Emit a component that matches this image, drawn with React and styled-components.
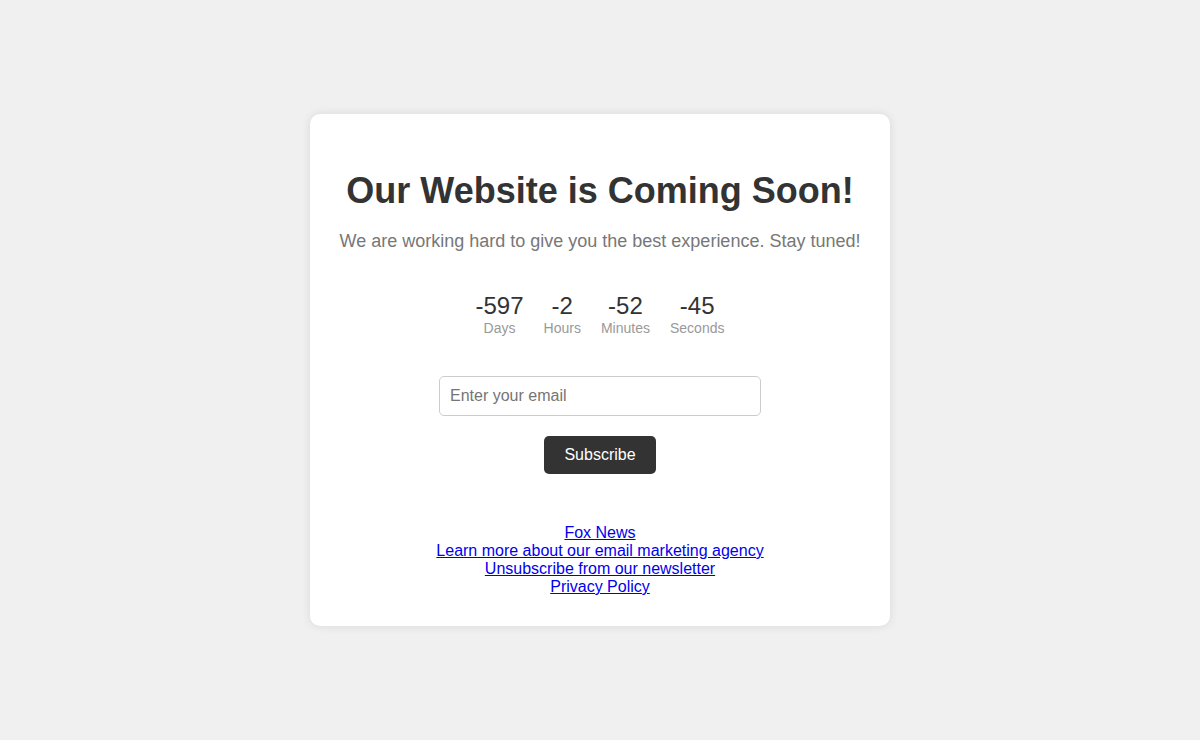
import styled, { createGlobalStyle } from "styled-components"

const GlobalStyle = createGlobalStyle`
  html, body {
    margin: 0;
    padding: 0;
  }
  body {
    background-color: #f0f0f0;
    font-family: "Liberation Sans", Arial, sans-serif;
  }
`

const Page = styled.div`
  display: flex;
  align-items: center;
  justify-content: center;
  height: 100vh;
`

const Card = styled.div`
  width: 580px;
  box-sizing: border-box;
  padding: 30px 20px 30px;
  background: #fff;
  border-radius: 10px;
  box-shadow: 0 0 10px rgba(0, 0, 0, 0.1);
  text-align: center;
`

const Title = styled.h1`
  margin: 26px 0 19px;
  font-size: 36px;
  font-weight: bold;
  color: #333;
`

const Subtitle = styled.p`
  margin: 0;
  font-size: 18px;
  color: #777;
  white-space: nowrap;
`

const Countdown = styled.div`
  display: flex;
  justify-content: center;
  gap: 20px;
  margin: 40px 0;
`

const Unit = styled.div`
  display: flex;
  flex-direction: column;
  align-items: center;
`

const Number = styled.span`
  font-size: 24px;
  color: #333;
`

const Label = styled.span`
  font-size: 14px;
  color: #999;
`

const Form = styled.form`
  display: flex;
  flex-direction: column;
  align-items: center;
  gap: 20px;
`

const EmailInput = styled.input`
  width: 300px;
  padding: 10px;
  font-size: 16px;
  font-family: inherit;
  border: 1px solid #ccc;
  border-radius: 5px;
  outline: none;
`

const Button = styled.button`
  padding: 10px 20px;
  font-size: 16px;
  font-family: inherit;
  line-height: 18px;
  color: #fff;
  background: #333;
  border: none;
  border-radius: 5px;
  cursor: pointer;
`

const Links = styled.div`
  margin-top: 50px;
  font-size: 16px;
  line-height: 18px;

  a {
    display: block;
    color: #0000ee;
  }
`

const time = [
  { value: -597, label: "Days" },
  { value: -2, label: "Hours" },
  { value: -52, label: "Minutes" },
  { value: -45, label: "Seconds" },
]

export default function App() {
  return (
    <Page>
      <GlobalStyle />
      <Card>
        <Title>Our Website is Coming Soon!</Title>
        <Subtitle>We are working hard to give you the best experience. Stay tuned!</Subtitle>
        <Countdown>
          {time.map((t) => (
            <Unit key={t.label}>
              <Number>{t.value}</Number>
              <Label>{t.label}</Label>
            </Unit>
          ))}
        </Countdown>
        <Form onSubmit={(e) => e.preventDefault()}>
          <EmailInput type="email" placeholder="Enter your email" />
          <Button type="submit">Subscribe</Button>
        </Form>
        <Links>
          <a href="#">Fox News</a>
          <a href="#">Learn more about our email marketing agency</a>
          <a href="#">Unsubscribe from our newsletter</a>
          <a href="#">Privacy Policy</a>
        </Links>
      </Card>
    </Page>
  )
}
